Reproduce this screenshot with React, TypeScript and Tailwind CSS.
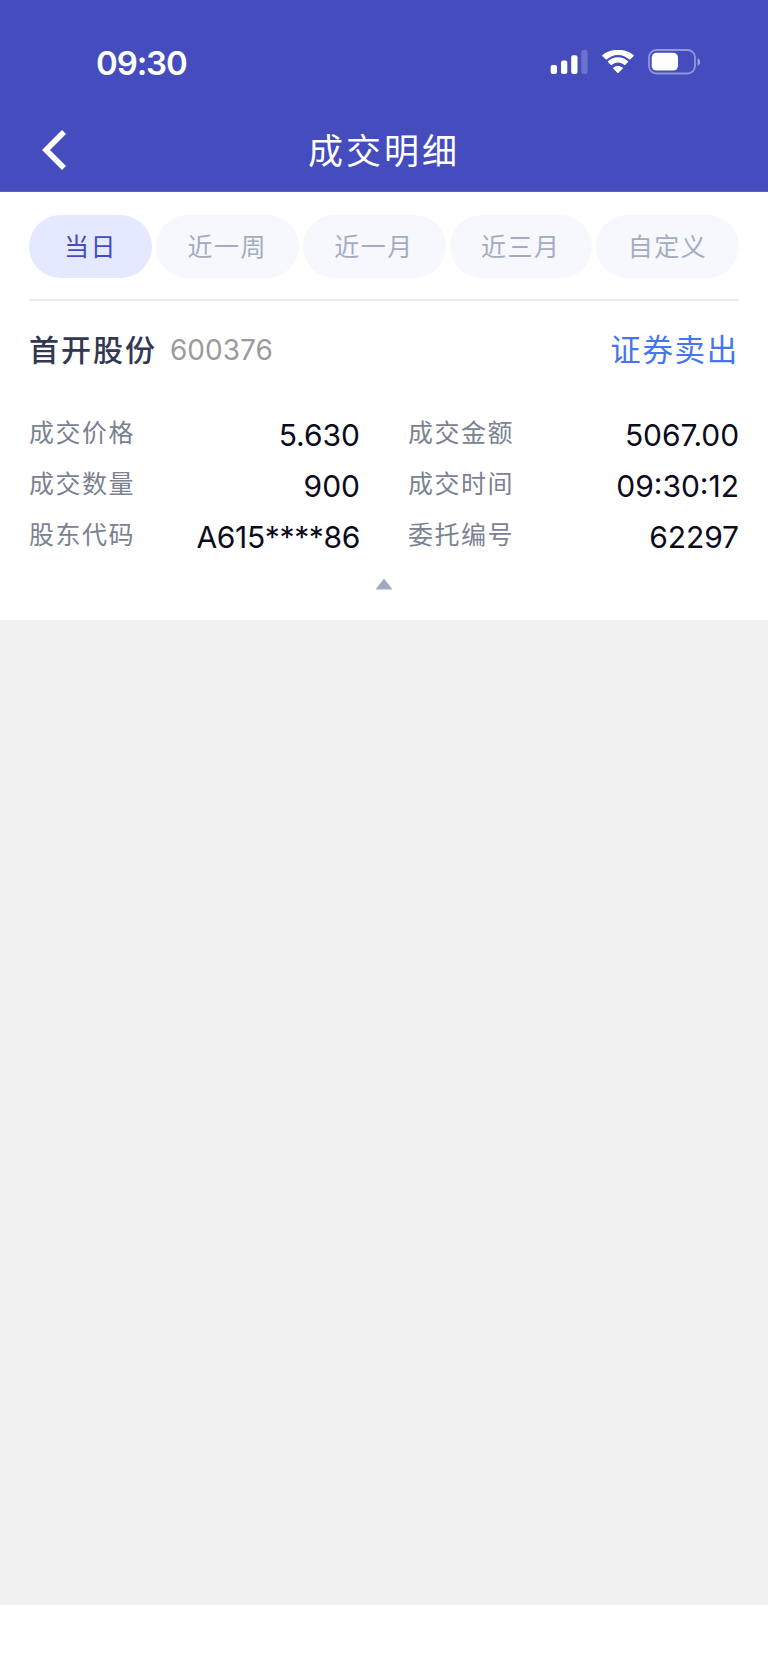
import clsx from "clsx"

interface Detail {
  label: string
  value: string
  tracking: string
}

const tabs = ["当日", "近一周", "近一月", "近三月", "自定义"]

const leftDetails: Detail[] = [
  { label: "成交价格", value: "5.630", tracking: "tracking-normal" },
  { label: "成交数量", value: "900", tracking: "tracking-normal" },
  { label: "股东代码", value: "A615****86", tracking: "tracking-[-0.35px]" }
]

const rightDetails: Detail[] = [
  { label: "成交金额", value: "5067.00", tracking: "tracking-[-0.1px]" },
  { label: "成交时间", value: "09:30:12", tracking: "tracking-normal" },
  { label: "委托编号", value: "62297", tracking: "tracking-[-0.1px]" }
]

const StatusBar = () => {
  return (
    <div className="flex h-[124px] items-center justify-between pl-[96px] pr-[67px]">
      <span className="pt-0.5 text-[33px] font-semibold leading-none tracking-[-1.1px]">
        09:30
      </span>

      <div className="flex items-center">
        <svg width="38" height="24" viewBox="0 0 38 24" fill="currentColor">
          <rect x="0.7" y="15" width="6.3" height="9" rx="2" />
          <rect x="11" y="10.6" width="6.3" height="13.4" rx="2" />
          <rect x="21.2" y="5.3" width="6.3" height="18.7" rx="2" />
          <rect x="31.3" y="0" width="6.3" height="24" rx="2" opacity="0.22" />
        </svg>

        <svg
          className="ml-[14px]"
          width="32"
          height="24"
          viewBox="0 0 32 24"
          fill="currentColor"
        >
          <path d="M16 4.9c4.3 0 8.3 1.7 11.3 4.6.2.2.6.2.8 0l3.6-3.4c.3-.3.3-.7 0-.9C23-2.1 9-2.1.3 5.2c-.3.2-.3.6 0 .9l3.6 3.4c.2.2.6.2.8 0C7.7 6.6 11.7 4.9 16 4.9z" />
          <path d="M16 12.6c2.4 0 4.6.9 6.3 2.4.2.2.6.2.8 0l3-2.9c.3-.3.3-.7 0-.9-5.7-5.2-14.5-5.2-20.2 0-.3.2-.3.6 0 .9l3 2.9c.2.2.6.2.8 0 1.7-1.5 3.9-2.4 6.3-2.4z" />
          <path d="M20.8 18.6c.3-.2.2-.6 0-.8-2.8-2.3-6.8-2.3-9.6 0-.2.2-.3.6 0 .8l4.4 4.4c.2.2.6.2.8 0z" />
        </svg>

        <svg className="ml-[14px]" width="53" height="26" viewBox="0 0 53 26">
          <rect
            x="1"
            y="1"
            width="46"
            height="23.5"
            rx="7.5"
            fill="none"
            stroke="currentColor"
            strokeWidth="1.8"
            opacity="0.42"
          />
          <rect x="3.7" y="3.8" width="26.3" height="17.8" rx="4.8" fill="currentColor" />
          <path d="M49.6 9v8c1.5-.7 2.5-2.2 2.5-4s-1-3.3-2.5-4z" fill="currentColor" opacity="0.5" />
        </svg>
      </div>
    </div>
  )
}

const DetailList = ({ items }: { items: Detail[] }) => {
  return (
    <dl className="flex flex-col">
      {items.map((item) => (
        <div
          key={item.label}
          className="flex h-[51px] items-center justify-between"
        >
          <dt className="pb-0.5 text-[25px] leading-none tracking-[1.5px] text-[#7b8291]">
            {item.label}
          </dt>
          <dd
            className={clsx(
              "text-[30px] leading-none text-[#0b0b1c]",
              item.tracking
            )}
          >
            {item.value}
          </dd>
        </div>
      ))}
    </dl>
  )
}

export default function App() {
  return (
    <div className="flex h-[1670px] w-[768px] flex-col bg-white font-['Inter','Noto_Sans_CJK_SC',sans-serif]">
      <header className="h-[192px] shrink-0 border-b border-[#5b62c8] bg-[#444cbe] text-white">
        <StatusBar />
        <div className="grid h-[52px] grid-cols-[1fr_auto_1fr] items-center px-[42px]">
          <button aria-label="返回">
            <svg width="25" height="40" viewBox="0 0 25 40" fill="none">
              <path d="M22 2 4 20l18 18" stroke="currentColor" strokeWidth="5.6" />
            </svg>
          </button>
          <h1 className="pt-0.5 text-[35px] leading-none tracking-[3px]">成交明细</h1>
        </div>
      </header>

      <main className="h-[428px] shrink-0 px-[29px] pt-[23px]">
        <nav className="flex gap-1 border-b-2 border-[#ededef] pb-[21px]">
          {tabs.map((tab, index) => (
            <button
              key={tab}
              className={clsx(
                "h-[63px] rounded-full pt-0.5 text-[25px] leading-none tracking-[1.5px]",
                index === 0
                  ? "w-[123px] bg-[#e5e9ff] text-[#444cbe]"
                  : "flex-1 bg-[#f7f8fd] text-[#a4acc2]"
              )}
            >
              {tab}
            </button>
          ))}
        </nav>

        <div className="flex h-[98px] items-center justify-between">
          <div className="flex items-center">
            <h2 className="text-[30px] font-medium leading-none tracking-[2px] text-[#323853]">
              首开股份
            </h2>
            <span className="ml-[13px] text-[28px] leading-none text-[#9b9b9b]">600376</span>
          </div>
          <span className="pt-px text-[30.5px] leading-none tracking-[1.7px] text-[#4576ee]">
            证券卖出
          </span>
        </div>

        <div className="mt-[10px] grid grid-cols-[331px_331px] justify-between">
          <DetailList items={leftDetails} />
          <DetailList items={rightDetails} />
        </div>

        <div className="mt-4 flex justify-center">
          <svg width="18" height="12" viewBox="0 0 18 12" fill="#a0a8be">
            <path d="M9 .5 17.5 11.5H.5z" />
          </svg>
        </div>
      </main>

      <div className="h-[985px] shrink-0 bg-[#f1f1f1]" />
    </div>
  )
}
